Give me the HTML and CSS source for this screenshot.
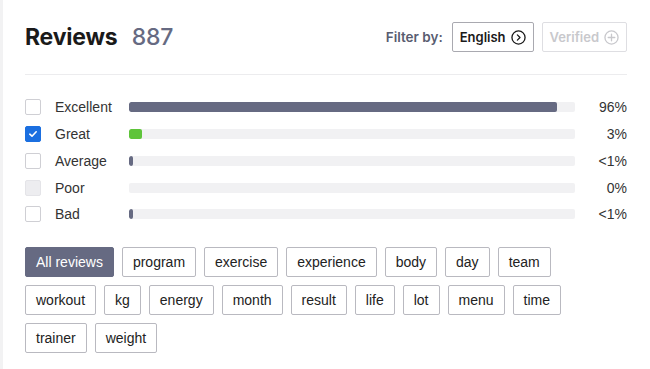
FILE: index.html
```html
<!DOCTYPE html>
<html lang="en">
    <head>
        <meta charset="UTF-8">
        <title>Reviews</title>
        <link rel="stylesheet" href="styles.css">
    </head>
    <body>
        <div class="reviews">
            <div class="reviews__head">
                <h1 class="reviews__title">Reviews <span class="reviews__count">887</span></h1>
                <div class="filter">
                    <span class="filter__label">Filter by:</span>
                    <button class="filter__btn" type="button">English
                        <svg width="15" height="15" viewBox="0 0 16 16"><circle cx="8" cy="8" r="7" fill="none" stroke="currentColor" stroke-width="1.4"/><path d="M6.8 5.2 9.6 8l-2.8 2.8" fill="none" stroke="currentColor" stroke-width="1.4" stroke-linecap="round" stroke-linejoin="round"/></svg>
                    </button>
                    <button class="filter__btn filter__btn--off" type="button">Verified
                        <svg width="15" height="15" viewBox="0 0 16 16"><circle cx="8" cy="8" r="7" fill="none" stroke="currentColor" stroke-width="1.4"/><path d="M8 4.5v7M4.5 8h7" fill="none" stroke="currentColor" stroke-width="1.4" stroke-linecap="round"/></svg>
                    </button>
                </div>
            </div>

            <div class="ratings">
                <label class="rating">
                    <span class="rating__box"></span>
                    <span class="rating__name">Excellent</span>
                    <span class="rating__bar"><span class="rating__fill" style="width: 96%"></span></span>
                    <span class="rating__value">96%</span>
                </label>
                <label class="rating">
                    <span class="rating__box rating__box--checked">
                        <svg width="10" height="10" viewBox="0 0 10 10"><path d="M1.8 5.2 4 7.2 8.2 2.8" fill="none" stroke="#fff" stroke-width="1.6" stroke-linecap="round" stroke-linejoin="round"/></svg>
                    </span>
                    <span class="rating__name">Great</span>
                    <span class="rating__bar"><span class="rating__fill rating__fill--green" style="width: 3%"></span></span>
                    <span class="rating__value">3%</span>
                </label>
                <label class="rating">
                    <span class="rating__box"></span>
                    <span class="rating__name">Average</span>
                    <span class="rating__bar"><span class="rating__fill" style="width: 4px"></span></span>
                    <span class="rating__value">&lt;1%</span>
                </label>
                <label class="rating">
                    <span class="rating__box rating__box--disabled"></span>
                    <span class="rating__name">Poor</span>
                    <span class="rating__bar"></span>
                    <span class="rating__value">0%</span>
                </label>
                <label class="rating">
                    <span class="rating__box"></span>
                    <span class="rating__name">Bad</span>
                    <span class="rating__bar"><span class="rating__fill" style="width: 4px"></span></span>
                    <span class="rating__value">&lt;1%</span>
                </label>
            </div>

            <div class="tags">
                <button class="tag tag--active" type="button">All reviews</button>
                <button class="tag" type="button">program</button>
                <button class="tag" type="button">exercise</button>
                <button class="tag" type="button">experience</button>
                <button class="tag" type="button">body</button>
                <button class="tag" type="button">day</button>
                <button class="tag" type="button">team</button>
                <button class="tag" type="button">workout</button>
                <button class="tag" type="button">kg</button>
                <button class="tag" type="button">energy</button>
                <button class="tag" type="button">month</button>
                <button class="tag" type="button">result</button>
                <button class="tag" type="button">life</button>
                <button class="tag" type="button">lot</button>
                <button class="tag" type="button">menu</button>
                <button class="tag" type="button">time</button>
                <button class="tag" type="button">trainer</button>
                <button class="tag" type="button">weight</button>
            </div>
        </div>
    </body>
</html>
```

FILE: styles.css
```css
:root{
    --slate: #666a82;
    --line: #ececee;
}

html, body{
    margin: 0;
    background: #fff;
}

body{
    border-left: 3px solid #f2f2f3;
    font-family: "Liberation Sans", Arial, sans-serif;
    color: #333;
    height: 369px;
    box-sizing: border-box;
}

.reviews{
    padding: 0 23px 0 22px;
}

.reviews__head{
    display: flex;
    align-items: center;
    justify-content: space-between;
    height: 74px;
    border-bottom: 1px solid var(--line);
}

.reviews__title{
    margin: 0;
    font-family: Inter, "Liberation Sans", sans-serif;
    font-size: 23px;
    font-weight: 700;
    color: #1a1a1a;
    letter-spacing: -0.2px;
}

.reviews__count{
    margin-left: 9px;
    font-weight: 500;
    color: var(--slate);
}

.filter{
    display: flex;
    align-items: center;
    font-family: Inter, "Liberation Sans", sans-serif;
}

.filter__label{
    font-size: 13.5px;
    font-weight: 600;
    color: #585c70;
    margin-right: 1px;
}

.filter__btn{
    display: flex;
    align-items: center;
    gap: 5px;
    height: 30px;
    padding: 0 7px;
    margin-left: 8px;
    background: #fff;
    border: 1px solid #a9a9b0;
    border-radius: 2px;
    font-family: inherit;
    font-size: 13px;
    font-weight: 600;
    color: #1a1a1a;
}

.filter__btn--off{
    border-color: #dedee2;
    color: #c8c8cc;
}

.ratings{
    padding-top: 19px;
}

.rating{
    display: flex;
    align-items: center;
    height: 26.75px;
    font-size: 14px;
}

.rating__box{
    display: flex;
    align-items: center;
    justify-content: center;
    width: 14px;
    height: 14px;
    border: 1px solid #cfcfd4;
    border-radius: 2px;
    background: #fff;
}

.rating__box--checked{
    background: #1b6fe0;
    border-color: #1b6fe0;
}

.rating__box--disabled{
    background: #ededf0;
    border-color: #e4e4e8;
}

.rating__name{
    width: 74px;
    margin-left: 14px;
}

.rating__bar{
    flex: 1;
    height: 10px;
    background: #f1f1f3;
    border-radius: 2px;
    overflow: hidden;
}

.rating__fill{
    display: block;
    height: 100%;
    background: var(--slate);
    border-radius: 2px;
}

.rating__fill--green{
    background: #5ec43a;
}

.rating__value{
    width: 52px;
    text-align: right;
}

.tags{
    display: flex;
    flex-wrap: wrap;
    gap: 8px 8px;
    margin-top: 19px;
    max-width: 560px;
}

.tag{
    height: 30px;
    padding: 0 10px;
    background: #fff;
    border: 1px solid #b9b9c0;
    border-radius: 2px;
    font-family: "Liberation Sans", Arial, sans-serif;
    font-size: 14px;
    color: #222;
}

.tag--active{
    background: var(--slate);
    border-color: var(--slate);
    color: #fff;
}
```
